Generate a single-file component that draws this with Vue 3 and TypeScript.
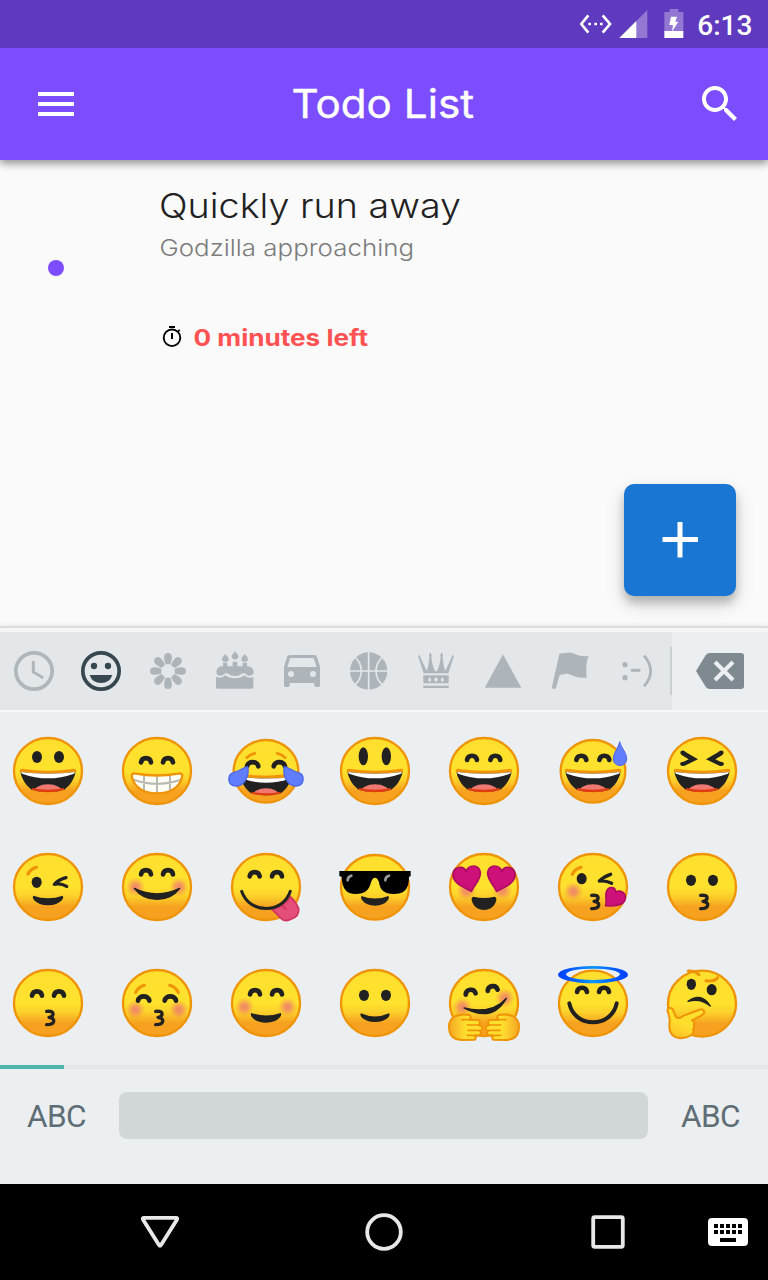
<script setup lang="ts">
interface Face { name: string; body: string; rx?: number; ry?: number; cy?: number }
interface Tab { name: string; body: string }

const INK = '#212121'
const EDGE = '#ef9408'

// Reusable facial features; the face is centred on 0,0 and about 204 units tall.
const stroke = (d: string, w: number, c = INK) =>
  `<path d="${d}" fill="none" stroke="${c}" stroke-width="${w}" stroke-linecap="round" stroke-linejoin="round"/>`
const fill = (d: string, c = INK, extra = '') => `<path d="${d}" fill="${c}" ${extra}/>`
const arc = (x: number, y: number, r = 15) =>
  stroke(`M${x - r} ${y}C${x - r + 3} ${y - 17} ${x + r - 3} ${y - 17} ${x + r} ${y}`, 14)
const arcs = (y: number, l = -33, r = 33, w = 15) => arc(l, y, w) + arc(r, y, w)
const dot = (x: number, y: number, rx = 15, ry = 17) =>
  `<ellipse cx="${x}" cy="${y}" rx="${rx}" ry="${ry}" fill="${INK}"/>`
const blush = (x: number, y: number) => `<circle cx="${x}" cy="${y}" r="30" fill="url(#blush)"/>`
const mirror = (s: string) => `<g transform="scale(-1 1)">${s}</g>`
const both = (s: string) => s + mirror(s)

const grin =
  stroke('M-79 -1Q0 11 79 -1', 12, EDGE) +
  `<g clip-path="url(#grin)"><rect x="-90" y="-10" width="180" height="80" fill="${INK}"/>` +
  '<path d="M-86 -4H86L78 8Q0 36 -78 8Z" fill="#fff"/>' +
  '<ellipse cx="0" cy="64" rx="44" ry="24" fill="#f07872"/>' +
  '<path d="M-48 51Q0 61 48 51V70H-48Z" fill="#e03c0c"/></g>'
const smirk = (y = 0) =>
  fill(`M-44 ${26 + y}Q0 ${41 + y} 44 ${26 + y}Q48 ${31 + y} 42 ${39 + y}Q28 ${55 + y} 0 ${55 + y}Q-28 ${55 + y} -42 ${39 + y}Q-48 ${31 + y} -44 ${26 + y}Z`)
const kiss = stroke('M-4 25Q17 23 15 35Q12 43 3 43Q19 46 17 55Q15 65 -4 65', 10)
const tear = fill('M-55 -13C-50 8 -60 45 -90 45C-116 45 -118 12 -98 5C-80 0 -70 -10 -55 -13Z', '#5f7dfc', 'stroke="#4c66ea" stroke-width="4"')
const bigHeart = fill('M-38 13C-60 1 -92 -10 -93 -35C-94 -60 -62 -68 -53 -46C-50 -68 -13 -70 -11 -44C-9 -22 -30 -5 -38 13Z', '#cd1179', 'stroke="#ad0b61" stroke-width="5" stroke-linejoin="round"')
const hugHand =
  fill('M-44 36Q-92 28 -104 60Q-111 111 -62 111L-28 110Q-20 103 -29 98L-14 97Q-5 90 -13 84L-8 82Q-1 75 -9 69L-16 66Q-8 57 -17 51L-44 50Q-35 41 -44 36Z', 'url(#hand)', `stroke="${EDGE}" stroke-width="6" stroke-linejoin="round"`) +
  stroke('M-66 50H-42M-50 66H-16M-48 82H-12M-50 97H-16', 5, EDGE)

const faces: Face[] = [
  { name: 'grinning', body: dot(-33, -42, 15, 18) + dot(33, -42, 15, 18) + grin },
  {
    name: 'beaming',
    body: arcs(-26) +
      fill('M-64 8Q0 19 64 8Q79 5 75 19C66 52 36 67 0 67C-36 67 -66 52 -75 19Q-79 5 -64 8Z', '#fffff6') +
      stroke('M-39 14V57M0 18V66M39 14V57M-68 27Q0 50 68 27', 6, '#b9b9b3') +
      stroke('M-64 8Q0 19 64 8Q79 5 75 19C66 52 36 67 0 67C-36 67 -66 52 -75 19Q-79 5 -64 8Z', 7, EDGE),
  },
  {
    name: 'joy', rx: 97, ry: 94, cy: 1,
    body: both(stroke('M-58 -40Q-46 -51 -33 -53', 8, EDGE)) + arcs(-14, -40, 40, 17) +
      `<g transform="translate(0 15) scale(.92)">${grin}</g>` + both(tear),
  },
  { name: 'big eyes', body: dot(-35, -44, 14, 27) + dot(34, -44, 14, 27) + grin },
  { name: 'smiling eyes', body: arcs(-33, -36, 34) + grin },
  {
    name: 'sweat', rx: 97, ry: 94, cy: 1,
    body: arcs(-33, -35, 34) + grin +
      fill('M80 -88C85 -68 101 -56 101 -36C101 -10 61 -10 61 -36C61 -56 76 -68 80 -88Z', '#5f7dfc', 'stroke="#4c66ea" stroke-width="3"'),
  },
  { name: 'squinting', body: both(fill('M-63 -60Q-55 -64 -48 -56L-12 -35L-54 -15Q-65 -13 -66 -22Q-64 -29 -55 -28L-40 -35L-60 -47Q-68 -53 -63 -60Z')) + grin },

  { name: 'wink', body: stroke('M-60 -39Q-52 -55 -35 -59', 10, EDGE) + dot(-34, -14) + stroke('M54 -28Q32 -22 19 -8Q38 -12 56 -2', 10) + smirk() },
  { name: 'blushing', body: blush(-65, 0) + blush(66, 0) + arcs(-38) + fill('M-68 4Q0 37 68 4Q44 37 0 37Q-44 37 -68 4Z', INK, `stroke="${INK}" stroke-width="4" stroke-linejoin="round"`) },
  {
    name: 'yummy',
    body: arcs(-32, -34, 33) + fill('M18 67L40 89Q55 107 75 97Q101 88 98 65Q90 45 73 29Q60 56 18 67Z', '#e54d7a', 'stroke="#cf365c" stroke-width="5"') +
      stroke('M46 54L60 66', 5, '#cf365c') + stroke('M-73 13C-50 82 50 82 73 13', 9),
  },
  {
    name: 'sunglasses', ry: 97, cy: 1,
    body: `<g transform="translate(0 1) scale(.92 1)">${smirk()}</g>` +
      fill('M-107 -48H107V-33L102 -30C102 10 85 21 55 21C28 21 15 10 12 -14Q8 -28 0 -28Q-8 -28 -12 -14C-18 12 -32 21 -57 21C-88 21 -98 5 -100 -30L-107 -33Z', '#000') +
      stroke('M-82 -20Q-82 -31 -71 -34M31 -20Q31 -31 42 -34', 8, '#999'),
  },
  { name: 'heart eyes', body: blush(-53, 11) + blush(55, 11) + both(bigHeart) + fill('M-31 29Q0 37 31 29Q40 31 36 43C30 62 15 69 0 69C-15 69 -30 62 -36 43Q-40 31 -31 29Z') },
  {
    name: 'blowing kiss',
    body: stroke('M-62 -38Q-54 -55 -36 -59', 10, EDGE) + dot(-34, -25) + stroke('M53 -38Q32 -31 19 -18Q38 -20 56 -11', 10) + blush(-59, 13) + kiss +
      fill('M38 56C43 40 36 30 40 15C45 -3 67 -3 68 15C80 8 99 15 97 34C95 53 70 58 38 56Z', '#cd1179', 'stroke="#ad0b61" stroke-width="5" stroke-linejoin="round"'),
  },
  { name: 'kissing', body: dot(-33, -20) + dot(33, -20) + kiss },

  { name: 'kissing smile', body: arcs(-22) + kiss },
  { name: 'kissing closed', body: both(stroke('M-64 -32Q-55 -49 -38 -53', 9, EDGE)) + blush(-65, 20) + blush(65, 20) + arcs(-7, -40, 40, 17) + kiss },
  { name: 'relaxed', body: blush(-65, 12) + blush(65, 12) + arcs(-26) + smirk(4) },
  { name: 'slight smile', body: dot(-33, -23) + dot(33, -23) + `<g transform="translate(0 4) scale(.96 .96)">${fill('M-44 28Q0 48 44 28Q48 32 42 40Q28 55 0 55Q-28 55 -42 40Q-48 32 -44 28Z')}</g>` },
  {
    name: 'hug',
    body: blush(-65, 12) + blush(63, -15) + `<g transform="rotate(-7 -40 -27)">${arc(-40, -27)}</g><g transform="rotate(-7 26 -38)">${arc(26, -38)}</g>` +
      fill('M-60 15Q22 35 67 -14Q25 60 -60 15Z', INK, `stroke="${INK}" stroke-width="4" stroke-linejoin="round"`) + both(hugHand),
  },
  {
    name: 'halo', ry: 98, cy: 1,
    body: arcs(-33) + stroke('M-71 1C-55 77 55 77 71 1', 12) +
      fill('M-105 -85A105 26 0 0 1 105 -85A105 26 0 0 1 -105 -85ZM-81 -86A81 17 0 0 0 81 -86A81 17 0 0 0 -81 -86Z', 'url(#halo)', 'fill-rule="evenodd"'),
  },
  {
    name: 'thinking', cy: 2,
    body: stroke('M-41 -96Q-20 -97 -9 -85M12 -67Q36 -63 47 -76', 9, EDGE) + dot(-32, -56, 14, 17) + dot(29, -40, 15, 17) +
      fill('M-42 -5Q-2 -34 25 9Q-4 -16 -42 -5Z', INK, `stroke="${INK}" stroke-width="4" stroke-linejoin="round"`) +
      fill('M-104 22Q-99 10 -88 18L-78 42Q-70 50 -55 38L-10 21Q4 15 7 26Q8 33 -4 39L-30 52Q-20 55 -25 66Q-21 72 -27 80Q-23 87 -29 94Q-40 104 -65 106Q-97 102 -98 72L-97 50Q-98 38 -104 22Z', 'url(#palm)', `stroke="${EDGE}" stroke-width="6" stroke-linejoin="round"`),
  },
]

const GREY = '#aeb5ba'
const BG = '#e3e7ea'
const petals = [0, 45, 90, 135, 180, 225, 270, 315]
  .map((a) => `<path d="M0 -54C14 -54 14 -38 7 -20H-7C-14 -38 -14 -54 0 -54Z" fill="${GREY}" transform="rotate(${a})"/>`).join('')
const candle = (x: number, y: number) =>
  fill(`M${x} ${y}C${x + 4} ${y + 8} ${x + 10} ${y + 9} ${x + 10} ${y + 17}C${x + 10} ${y + 28} ${x - 10} ${y + 28} ${x - 10} ${y + 17}C${x - 10} ${y + 9} ${x - 4} ${y + 8} ${x} ${y}Z`, GREY)

const tabs: Tab[] = [
  { name: 'recent', body: '<circle r="54.5" fill="none" stroke="#afb7ba" stroke-width="11"/><path d="M-2 -30V3L28 21" fill="none" stroke="#afb7ba" stroke-width="9"/>' },
  { name: 'smileys', body: '<circle r="54.5" fill="none" stroke="#37474f" stroke-width="11"/><circle cx="-21" cy="-15" r="9.5" fill="#37474f"/><circle cx="21" cy="-15" r="9.5" fill="#37474f"/><path d="M-34 12H34Q26 36 0 36Q-26 36 -34 12Z" fill="#37474f"/>' },
  { name: 'nature', body: petals + `<circle r="17.5" fill="${BG}"/>` },
  {
    name: 'food',
    body: candle(-29, -52) + candle(0, -60) + candle(29, -52) +
      fill('M-36 -25H-23V-14H-7V-28H7V-14H23V-25H36V-14Q56 -13 56 4Q54 14 44 14Q36 14 31 8Q26 4 21 8Q12 15 0 15Q-12 15 -21 8Q-26 4 -31 8Q-36 14 -46 14Q-56 13 -56 2Q-54 -14 -36 -14Z', GREY) +
      fill('M-57 18Q-40 24 -29 13Q-18 22 0 22Q18 22 28 13Q38 24 55 18V49Q55 53 51 53H-53Q-57 53 -57 49Z', GREY),
  },
  { name: 'travel', body: fill('M-45 -42Q-43 -48 -37 -48H37Q43 -48 45 -42L54 -12V43Q54 48 49 48H42Q37 48 37 43V36H-37V43Q-37 48 -42 48H-49Q-54 48 -54 43V-12ZM-35 -39L-44 -12H44L35 -39ZM-33 0A9 9 0 1 0 -33 18A9 9 0 1 0 -33 0ZM33 0A9 9 0 1 0 33 18A9 9 0 1 0 33 0Z', GREY, 'fill-rule="evenodd"') },
  { name: 'activity', body: `<g transform="translate(-1 0)"><circle r="56" fill="${GREY}"/><path d="M0 -58V58M-58 0H58M-43 -43C-15 -20 -15 20 -43 43M43 -43C15 -20 15 20 43 43" fill="none" stroke="${BG}" stroke-width="5"/></g>` },
  {
    name: 'objects',
    body: fill('M-37 7L-51 -37L-54 -46L-48 -47L-46 -38L-28 -1Q-23 -9 -20 -40L-21 -48L-17 -56L-13 -48L-14 -40Q-9 -4 0 2Q9 -4 14 -40L13 -48L17 -56L21 -48L20 -40Q23 -9 28 -1L46 -38L48 -47L54 -46L51 -37L37 7Z', GREY) +
      fill('M-38 13H38V37H-38ZM-38 44H38V51H-38Z', GREY) +
      `<g fill="${BG}"><path d="M-19 18L-14 27L-19 34L-24 27ZM0 17L6 26L0 34L-6 26ZM19 18L24 27L19 34L14 27Z"/></g>`,
  },
  { name: 'symbols', body: fill('M0 -50L54 49V50H-54V49Z', GREY) },
  { name: 'flags', body: fill('M-32 -50Q-30 -54 -25 -53Q-15 -53 -10 -55Q6 -58 22 -48Q38 -42 56 -45Q46 -26 50 20Q30 22 12 16Q-6 4 -20 10L-31 12L-42 50Q-44 55 -49 54Q-55 52 -54 47Z', GREY) },
  { name: 'emoticons', body: `<circle cx="-36" cy="-19" r="8" fill="${GREY}"/><circle cx="-36" cy="20" r="8" fill="${GREY}"/><path d="M-18 -2H10" stroke="${GREY}" stroke-width="9"/><path d="M21 -46Q41 -23 41 0Q41 23 21 46" fill="none" stroke="${GREY}" stroke-width="8.5"/>` },
]
</script>

<template>
  <div class="screen">
    <svg class="defs" width="0" height="0" aria-hidden="true">
      <defs>
        <linearGradient id="face" x1="0" y1="0" x2="0" y2="1">
          <stop offset="0" stop-color="#ffdf2d" /><stop offset=".5" stop-color="#ffe22e" />
          <stop offset=".64" stop-color="#fcd02b" /><stop offset=".8" stop-color="#f6a220" />
        </linearGradient>
        <radialGradient id="blush">
          <stop offset="0" stop-color="#f0806c" stop-opacity=".9" /><stop offset=".35" stop-color="#f0826a" stop-opacity=".75" /><stop offset="1" stop-color="#f6a040" stop-opacity="0" />
        </radialGradient>
        <linearGradient id="hand"><stop offset="0" stop-color="#f6a626" /><stop offset=".5" stop-color="#ffdf2e" /></linearGradient>
        <linearGradient id="palm" x1="0" y1="1" x2=".5" y2=".2"><stop offset="0" stop-color="#fbb924" /><stop offset=".7" stop-color="#ffdf2e" /></linearGradient>
        <linearGradient id="halo"><stop offset="0" stop-color="#0040ff" /><stop offset=".15" stop-color="#0052ff" /><stop offset=".5" stop-color="#0a96ff" /><stop offset=".85" stop-color="#0052ff" /><stop offset="1" stop-color="#0040ff" /></linearGradient>
        <clipPath id="grin"><path d="M-83 3Q0 14 83 3C76 32 62 46 49 56Q0 71 -49 56C-62 46 -76 32 -83 3Z" /></clipPath>
      </defs>
    </svg>

    <header class="status">
      <svg class="status-icons" viewBox="50 0 330 144">
        <g fill="none" stroke="#fff" stroke-width="8"><path d="M84 46L63 72L84 98M127 46L149 72L127 98" /></g>
        <path d="M84 68h8v8h-8zM102 68h8v8h-8zM119 68h8v8h-8z" fill="#fff" />
        <path d="M261 30V114H177Z" fill="#9277d3" /><path d="M228 63V114H177Z" fill="#fff" />
        <path d="M328 27H354V36H369V94H312V36H328Z" fill="#9277d3" /><path d="M312 93H369V114H312Z" fill="#fff" />
        <path d="M332 50H350L345 65H354L335 95L338 75H327Z" fill="#fff" />
      </svg>
      <span class="time">6:13</span>
    </header>

    <div class="appbar">
      <svg width="48" height="48" viewBox="0 0 24 24"><path d="M3 6h18v2H3zM3 11h18v2H3zM3 16h18v2H3z" fill="#fff" /></svg>
      <svg width="200" height="64" viewBox="0 0 200 64" class="title"><text x="7.5" y="46" textLength="182.5" lengthAdjust="spacingAndGlyphs">Todo List</text></svg>
      <svg width="48" height="48" viewBox="0 0 24 24"><path fill="#fff" d="M15.5 14h-.79l-.28-.27C15.41 12.59 16 11.11 16 9.5 16 5.91 13.09 3 9.5 3S3 5.91 3 9.5 5.91 16 9.5 16c1.61 0 3.09-.59 4.23-1.57l.27.28v.79l5 4.99L20.49 19l-4.99-5zm-6 0C7.01 14 5 11.99 5 9.5S7.01 5 9.5 5 14 7.01 14 9.5 11.99 14 9.5 14z" /></svg>
    </div>

    <main class="content">
      <div class="task">
        <span class="bullet" />
        <div class="details">
          <svg class="name" width="310" height="50"><text x="-1" y="34" textLength="302" lengthAdjust="spacingAndGlyphs">Quickly run away</text></svg>
          <svg class="note" width="310" height="40"><text x="-.5" y="22" textLength="254.5" lengthAdjust="spacingAndGlyphs">Godzilla approaching</text></svg>
          <div class="due">
            <svg width="24" height="24" viewBox="0 0 24 24"><circle cx="12" cy="12.8" r="8.3" fill="none" stroke="#000" stroke-width="1.9" /><path d="M9 1h6v2H9zM11 8h2v6h-2zM17.3 6l1.8-1.8 1.2 1.2-1.8 1.8z" /></svg>
            <svg class="left" width="190" height="36"><text x="9.5" y="26" textLength="174.5" lengthAdjust="spacingAndGlyphs">0 minutes left</text></svg>
          </div>
        </div>
      </div>
      <button class="fab"><svg width="36" height="36" viewBox="0 0 36 36"><path d="M15.5 0h5v15h15.5v5H20.5V35.5h-5V20H.5v-5h15z" fill="#fff" /></svg></button>
    </main>

    <section class="keyboard">
      <nav class="tabs">
        <div class="tab-list">
          <svg v-for="t in tabs" :key="t.name" width="48" height="48" viewBox="-72 -72 144 144"><g v-html="t.body" /></svg>
        </div>
        <div class="erase">
          <svg width="48" height="48" viewBox="-72 -72 144 144"><path d="M-72 0L-43 -47Q-38 -54 -31 -54H63Q72 -54 72 -46V46Q72 54 63 54H-31Q-38 54 -43 47Z" fill="#7e8a8f" /><path d="M-15 -27L39 27M39 -27L-15 27" stroke="#eceff1" stroke-width="12" /></svg>
        </div>
      </nav>
      <div class="emoji">
        <svg v-for="f in faces" :key="f.name" width="80" height="80" viewBox="-120 -120 240 240">
          <ellipse :cy="f.cy ?? 0" :rx="f.rx ?? 102" :ry="f.ry ?? 99" fill="url(#face)" stroke="#ef9408" stroke-width="7" />
          <g v-html="f.body" />
        </svg>
      </div>
      <div class="pager"><span /></div>
      <div class="keys"><span>ABC</span><div class="space" /><span>ABC</span></div>
    </section>

    <footer class="navbar">
      <svg width="768" height="96" viewBox="0 0 768 96" fill="none" stroke="#e8e8e8" stroke-width="3.8">
        <path d="M144 33.8H176Q177.8 33.8 177 35.5L161 61Q160 62.5 159 61L143 35.5Q142.2 33.8 144 33.8Z" />
        <circle cx="384" cy="48" r="16.8" />
        <rect x="593.2" y="33.2" width="29.6" height="29.6" rx="1.5" />
        <rect x="708" y="34" width="40" height="28" rx="4" fill="#fff" stroke="none" />
        <path d="M714 42H743M714 48H743" stroke="#000" stroke-width="4" stroke-dasharray="4 2" />
        <path d="M720 56H736" stroke="#000" stroke-width="4" />
      </svg>
    </footer>
  </div>
</template>

<style>
body { margin: 0; }
</style>

<style scoped>
.screen { width: 768px; height: 1280px; display: flex; flex-direction: column; background: #fafafa; overflow: hidden; font-family: Roboto, sans-serif; position: relative; }
svg { display: block; flex: none; overflow: visible; }
.defs { position: absolute; }
.status { height: 48px; flex: none; background: #5f3abe; display: flex; justify-content: flex-end; align-items: center; padding-right: 15.5px; box-sizing: border-box; z-index: 2; }
.status-icons { width: 110px; height: 48px; margin-right: 10.3px; }
.time { color: #fff; font-size: 28px; font-weight: 500; line-height: 48px; width: 55.2px; white-space: nowrap; padding-top: 3px; }
.appbar { height: 112px; flex: none; background: #7c4dff; display: flex; align-items: center; justify-content: space-between; padding: 0 24px 0 32px; box-shadow: 0 4px 8px rgba(0,0,0,.22), 0 2px 9px rgba(0,0,0,.28); z-index: 1; }
.title { font: 400 39.5px Inter, sans-serif; fill: #fff; stroke: #fff; stroke-width: .4px; margin-right: 8px; }
.content { height: 466px; flex: none; position: relative; box-sizing: border-box; padding: 24px 48px 0; }
.task { display: flex; align-items: center; }
.bullet { width: 16px; height: 16px; border-radius: 50%; background: #7c4dff; margin: -16px 96px 0 0; }
.details { display: flex; flex-direction: column; height: 184px; }
.name { font: 300 34.5px Inter, sans-serif; fill: #212121; }
.note { font: 300 23px Inter, sans-serif; fill: #7c7c7c; }
.due { display: flex; align-items: center; margin-top: 46px; }
.due > svg:first-child { margin-top: -2px; }
.left { font: 700 23px Inter, sans-serif; fill: #ff5252; }
.fab { position: absolute; right: 32px; top: 324px; width: 112px; height: 112px; border: 0; border-radius: 10px; background: #1976d2; display: flex; align-items: center; justify-content: center; box-shadow: 0 7px 10px rgba(0,0,0,.2), 0 8px 20px rgba(0,0,0,.14); }
.keyboard { height: 558px; flex: none; background: #ebeff2; box-sizing: border-box; border-top: 2px solid #dcdcdc; z-index: 1; box-shadow: 0 -1px 5px rgba(0,0,0,.07); }
.tabs { height: 78px; display: flex; border-top: 4px solid #f3f5f6; border-bottom: 2px solid #f6f8f9; }
.tab-list { width: 672px; background: #e3e7ea; display: flex; align-items: center; gap: 19px; padding-left: 10px; box-sizing: border-box; }
.erase { display: flex; flex: 1; align-items: center; margin-left: -2px; }
.erase::before { content: ""; width: 2px; height: 48px; background: #c9ced1; margin-right: 24px; }
.emoji { height: 353px; box-sizing: border-box; padding: 19px 0 0 8px; display: grid; grid-template-columns: repeat(7, 80px); grid-auto-rows: 80px; gap: 36px 29px; }
.pager { height: 4px; background: #e3e7e9; }
.pager span { display: block; width: 64px; height: 4px; background: #4db6ac; }
.keys { display: flex; align-items: center; justify-content: space-between; padding: 23px 28px 0 27px; height: 47px; color: #5f6d74; font-size: 31.5px; letter-spacing: -.6px; }
.keys span { padding-top: 2px; }
.space { width: 529px; height: 47px; border-radius: 8px; background: #d1d6d9; }
.navbar { height: 96px; flex: none; background: #000; z-index: 1; }
</style>
